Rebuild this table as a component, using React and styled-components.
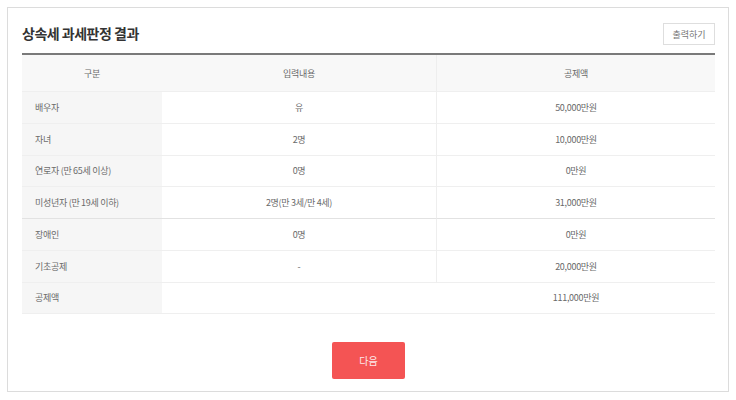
import React from 'react'
import styled, { createGlobalStyle } from 'styled-components'

// Style
const GlobalStyle = createGlobalStyle`
  body {
    margin: 0;
    background: #fff;
    font-family: 'Noto Sans CJK KR', 'Noto Sans', sans-serif;
  }
`
const Page = styled.div`
  padding: 7px;
  width: 736px;
  box-sizing: border-box;
`
const Card = styled.div`
  border: 1px solid #dcdcdc;
  height: 385px;
  box-sizing: border-box;
  padding: 14px 13px 0 14px;
  display: flex;
  flex-direction: column;
`
const TitleBar = styled.div`
  display: flex;
  align-items: flex-start;
  justify-content: space-between;
  height: 31px;
  border-bottom: 2px solid #7a7a7a;
`
const Title = styled.h2`
  margin: 1px 0 0;
  font-size: 14px;
  line-height: 20px;
  font-weight: 700;
  color: #333;
  letter-spacing: -0.5px;
`
const PrintButton = styled.button`
  height: 22px;
  width: 52px;
  margin-top: 1px;
  padding: 0;
  border: 1px solid #dedede;
  background: #fff;
  font-family: inherit;
  font-size: 9px;
  color: #777;
`
const Table = styled.div`
  display: grid;
  grid-template-columns: 140px 275px 1fr;
`
const Cell = styled.div`
  height: ${(p) => (p.head ? '37px' : '31.75px')};
  display: flex;
  align-items: center;
  justify-content: ${(p) => (p.left ? 'flex-start' : 'center')};
  padding-left: ${(p) => (p.left ? '13px' : '0')};
  box-sizing: border-box;
  font-size: 9px;
  color: #6a6a6a;
  letter-spacing: -0.3px;
  background: ${(p) => (p.head ? '#f8f8f8' : p.gray ? '#f6f6f6' : '#fff')};
  border-bottom: 1px solid ${(p) => (p.strong ? '#e2e2e2' : '#efefef')};
  border-right: ${(p) => (p.divide ? '1px solid #eeeeee' : '0')};
`
const Footer = styled.div`
  display: flex;
  justify-content: center;
  padding-top: 28px;
`
const NextButton = styled.button`
  width: 73px;
  height: 37px;
  border: 0;
  border-radius: 2px;
  background: #f45454;
  color: #fde8e8;
  font-family: inherit;
  font-size: 10px;
`

const rows = [
  ['배우자', '유', '50,000만원'],
  ['자녀', '2명', '10,000만원'],
  ['연로자 (만 65세 이상)', '0명', '0만원'],
  ['미성년자 (만 19세 이하)', '2명(만 3세/만 4세)', '31,000만원'],
  ['장애인', '0명', '0만원'],
  ['기초공제', '-', '20,000만원'],
]

// Composant
function App() {
  return (
    <Page>
      <GlobalStyle />
      <Card>
        <TitleBar>
          <Title>상속세 과세판정 결과</Title>
          <PrintButton>출력하기</PrintButton>
        </TitleBar>
        <Table>
          <Cell head>구분</Cell>
          <Cell head divide>입력내용</Cell>
          <Cell head>공제액</Cell>
          {rows.map((row, id) => (
            <React.Fragment key={id}>
              <Cell left gray strong={id === 3}>{row[0]}</Cell>
              <Cell divide strong={id === 3}>{row[1]}</Cell>
              <Cell strong={id === 3}>{row[2]}</Cell>
            </React.Fragment>
          ))}
          <Cell left gray>공제액</Cell>
          <Cell></Cell>
          <Cell>111,000만원</Cell>
        </Table>
        <Footer>
          <NextButton>다음</NextButton>
        </Footer>
      </Card>
    </Page>
  )
}

export default App
